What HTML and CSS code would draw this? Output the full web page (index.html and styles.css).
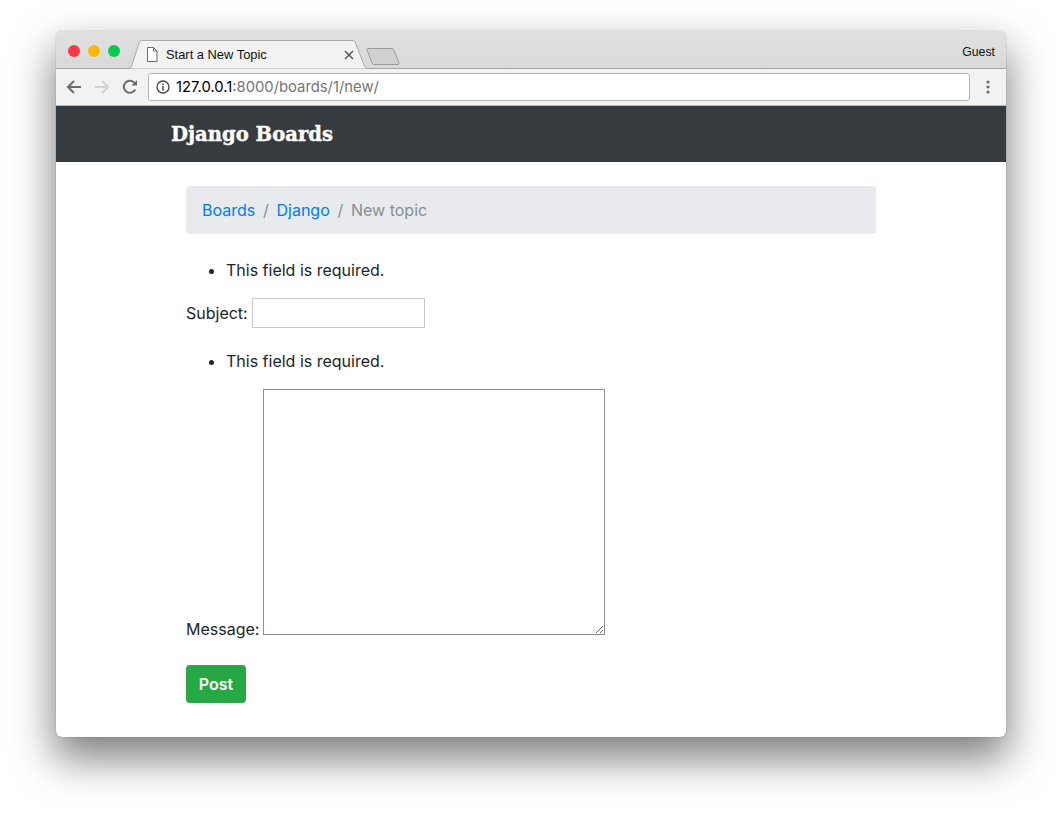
FILE: index.html
```html
<!DOCTYPE html>
<html lang="en">

<head>
  <meta charset="UTF-8">
  <title>Start a New Topic</title>
  <link rel="stylesheet" href="styles.css">
</head>

<body>
  <div class="window">
    <div class="tabbar">
      <div class="lights">
        <span class="light light-red"></span>
        <span class="light light-yellow"></span>
        <span class="light light-green"></span>
      </div>
      <div class="tab">
        <svg class="tab-shape" width="243" height="29" viewBox="0 0 243 29">
          <path d="M0 28.5H2C4 28.5 5 27.5 5.6 26L13 3C13.6 1.4 14.6 .5 16.5 .5H226C228 .5 229 1.4 229.6 3L238 25C238.7 27 240 28.5 242 28.5H243" fill="#f2f2f2" stroke="#a9a9a9" />
        </svg>
        <svg class="tab-icon" width="12" height="15" viewBox="0 0 12 15">
          <path d="M1.5 .5H7.5L11 4V14.5H1.5ZM7.5 .5V4H11" fill="#fff" stroke="#6a6a6a" />
        </svg>
        <span class="tab-title">Start a New Topic</span>
        <svg class="tab-close" width="10" height="10" viewBox="0 0 10 10">
          <path d="M1 1L9 9M9 1L1 9" stroke="#555" stroke-width="1.5" />
        </svg>
      </div>
      <svg class="newtab" width="34" height="17" viewBox="0 0 34 17">
        <path d="M1 1.5C.8 .9 1.2 .5 2 .5H26C26.8 .5 27.3 .9 27.6 1.5L33 14.5C33.3 15.6 33 16.5 32 16.5H8C7 16.5 6.3 16 6 15.2Z" fill="#d0d0d0" stroke="#9a9a9a" />
      </svg>
      <span class="guest">Guest</span>
    </div>

    <div class="toolbar">
      <svg class="tool" width="16" height="16" viewBox="0 0 16 16">
        <path d="M15 8H2M8 2L2 8L8 14" fill="none" stroke="#6b6b6b" stroke-width="2" />
      </svg>
      <svg class="tool" width="16" height="16" viewBox="0 0 16 16">
        <path d="M1 8H14M8 2L14 8L8 14" fill="none" stroke="#d2d2d2" stroke-width="2" />
      </svg>
      <svg class="tool" width="16" height="16" viewBox="0 0 16 16">
        <path d="M13.2 10.5A6 6 0 1 1 12.6 4.2" fill="none" stroke="#6b6b6b" stroke-width="2" />
        <path d="M9.5 6.5H15V1Z" fill="#6b6b6b" />
      </svg>
      <div class="omnibox">
        <svg class="info" width="14" height="14" viewBox="0 0 14 14">
          <circle cx="7" cy="7" r="6" fill="none" stroke="#444" stroke-width="1.3" />
          <path d="M7 6V10.5M7 3.4V5" stroke="#444" stroke-width="1.5" />
        </svg>
        <span class="url-host">127.0.0.1</span><span class="url-path">:8000/boards/1/new/</span>
      </div>
      <svg class="kebab" width="4" height="14" viewBox="0 0 4 14">
        <circle cx="2" cy="2" r="1.6" fill="#6b6b6b" />
        <circle cx="2" cy="7" r="1.6" fill="#6b6b6b" />
        <circle cx="2" cy="12" r="1.6" fill="#6b6b6b" />
      </svg>
    </div>

    <div class="navbar">
      <a class="brand" href="#">Django Boards</a>
    </div>

    <div class="page">
      <ol class="breadcrumb">
        <li><a href="#">Boards</a></li>
        <li class="sep">/</li>
        <li><a href="#">Django</a></li>
        <li class="sep">/</li>
        <li class="active">New topic</li>
      </ol>

      <form>
        <ul class="errorlist">
          <li>This field is required.</li>
        </ul>
        <p class="field">
          <label for="id_subject">Subject:</label>
          <input type="text" id="id_subject" />
        </p>
        <ul class="errorlist">
          <li>This field is required.</li>
        </ul>
        <p class="field">
          <label for="id_message">Message:</label>
          <textarea id="id_message"></textarea>
        </p>
        <button class="btn-post" type="button">Post</button>
      </form>
    </div>
  </div>
</body>

</html>
```

FILE: styles.css
```css
html,
body {
  margin: 0;
  background-color: #fff;
}

body {
  height: 817px;
  padding: 31px 56px 0;
  box-sizing: border-box;
  overflow: hidden;
  font-family: "Inter", "Liberation Sans", sans-serif;
}

.window {
  width: 950px;
  height: 706px;
  border-radius: 6px;
  overflow: hidden;
  background-color: #fff;
  box-shadow: 0 0 1px rgba(0, 0, 0, .5), 0 20px 42px 2px rgba(0, 0, 0, .5);
}

.tabbar {
  display: flex;
  align-items: flex-start;
  height: 37px;
  border-bottom: 1px solid #a6a6a6;
  background: linear-gradient(#e1e1e1, #d9d9d9);
  font-family: "Liberation Sans", sans-serif;
}

.lights {
  display: flex;
  gap: 8px;
  margin: 14px 0 0 12px;
}

.light {
  width: 12px;
  height: 12px;
  border-radius: 50%;
}

.light-red {
  background-color: #fc3a45;
}

.light-yellow {
  background-color: #fdb90b;
}

.light-green {
  background-color: #05cb4e;
}

.tab {
  position: relative;
  display: flex;
  align-items: center;
  width: 243px;
  height: 29px;
  margin: 9px 0 0 6px;
}

.tab-shape {
  position: absolute;
  left: 0;
  top: 0;
}

.tab-icon {
  position: relative;
  margin: 0 0 0 20px;
}

.tab-title {
  position: relative;
  margin-left: 8px;
  font-size: 12.9px;
  color: #111;
}

.tab-close {
  position: relative;
  margin-left: 77px;
}

.newtab {
  margin: 17px 0 0 -3px;
}

.guest {
  margin: 14px 11px 0 auto;
  font-size: 12.3px;
  color: #111;
}

.toolbar {
  display: flex;
  align-items: center;
  height: 36px;
  border-bottom: 1px solid #b4b4b4;
  padding-left: 10px;
  background-color: #f2f2f2;
}

.tool {
  margin-right: 12px;
}

.omnibox {
  display: flex;
  align-items: center;
  width: 820px;
  height: 26px;
  margin-left: -2px;
  border: 1px solid #b3b3b3;
  border-radius: 3px;
  background-color: #fff;
  font-size: 14.8px;
}

.info {
  margin: 0 6px 0 7px;
}

.url-host {
  color: #000;
}

.url-path {
  color: #757575;
}

.kebab {
  margin-left: 16px;
}

.navbar {
  height: 56px;
  padding-left: 115px;
  background-color: #363b3f;
  line-height: 58px;
}

.brand {
  font-family: "DejaVu Serif", serif;
  font-size: 19.6px;
  font-weight: 700;
  color: #fff;
  text-decoration: none;
  -webkit-text-stroke: .4px #fff;
}

.page {
  width: 690px;
  margin-left: 130px;
  padding-top: 24px;
  font-size: 16px;
  line-height: 24px;
  color: #212529;
}

.breadcrumb {
  display: flex;
  gap: 7.75px;
  height: 48px;
  margin: 0 0 24px;
  padding: 12px 16px;
  box-sizing: border-box;
  border-radius: 4px;
  background-color: #e8eaed;
  list-style: none;
}

.breadcrumb a {
  color: #007bff;
  text-decoration: none;
}

.sep,
.active {
  color: #868e96;
}

.errorlist {
  margin: 0 0 16px;
  padding-left: 40px;
}

.field {
  margin: 0 0 21px;
}

#id_subject {
  width: 173px;
  height: 30px;
  padding: 1px 2px;
  box-sizing: border-box;
  border: 1px solid #c8c8c8;
  font-size: 13px;
  vertical-align: 1px;
}

#id_message {
  width: 342px;
  height: 246px;
  margin-left: -1px;
  box-sizing: border-box;
  border: 1px solid #8f8f8f;
  font-size: 13px;
}

.btn-post {
  display: block;
  width: 60px;
  height: 38px;
  margin-top: 24px;
  border: 0;
  border-radius: 4px;
  background-color: #28a745;
  color: #fff;
  font: 600 16px "Inter", "Liberation Sans", sans-serif;
}
```
